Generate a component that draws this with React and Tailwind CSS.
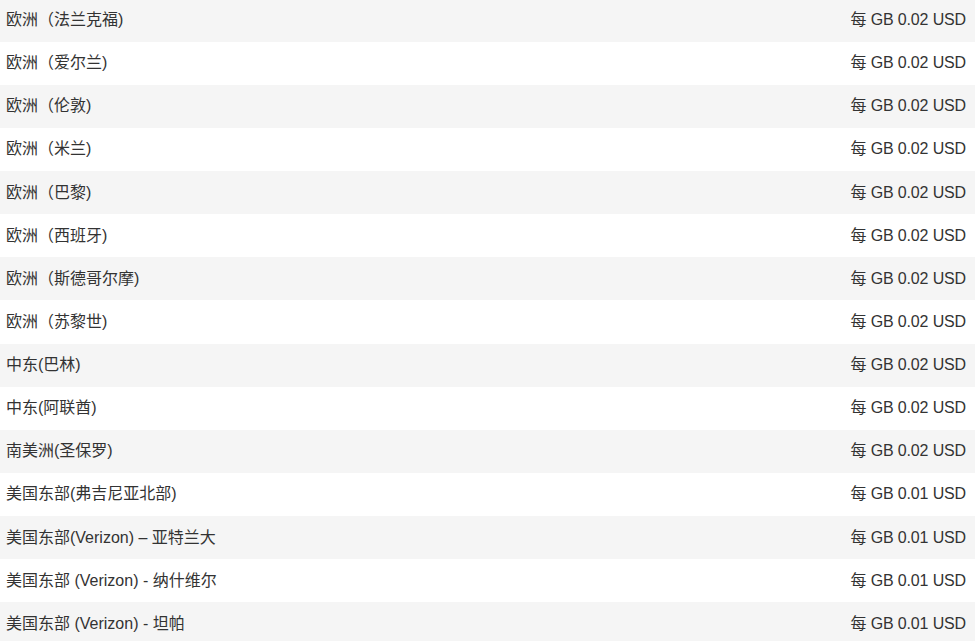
const rows = [
  ["欧洲（法兰克福)", "0.02"],
  ["欧洲（爱尔兰)", "0.02"],
  ["欧洲（伦敦)", "0.02"],
  ["欧洲（米兰)", "0.02"],
  ["欧洲（巴黎)", "0.02"],
  ["欧洲（西班牙)", "0.02"],
  ["欧洲（斯德哥尔摩)", "0.02"],
  ["欧洲（苏黎世)", "0.02"],
  ["中东(巴林)", "0.02"],
  ["中东(阿联酋)", "0.02"],
  ["南美洲(圣保罗)", "0.02"],
  ["美国东部(弗吉尼亚北部)", "0.01"],
  ["美国东部(Verizon) – 亚特兰大", "0.01"],
  ["美国东部 (Verizon) - 纳什维尔", "0.01"],
  ["美国东部 (Verizon) - 坦帕", "0.01"],
];

function App() {
  return (
    <div className="w-[980px] h-[641px] overflow-hidden bg-white">
      <div
        className="w-[975px] mt-[-1.5px] text-[16px] text-[#333]"
        style={{ fontFamily: '"Liberation Sans", "Noto Sans CJK SC", sans-serif' }}
      >
        {rows.map(([region, price], i) => (
          <div
            key={i}
            className={`flex items-center justify-between h-[43.14px] pl-[6px] pr-[9px] ${
              i % 2 === 0 ? "bg-[#f5f5f5]" : "bg-white"
            }`}
          >
            <span>{region}</span>
            <span className="tracking-[-0.15px]">每 GB {price} USD</span>
          </div>
        ))}
      </div>
    </div>
  );
}

export default App;
